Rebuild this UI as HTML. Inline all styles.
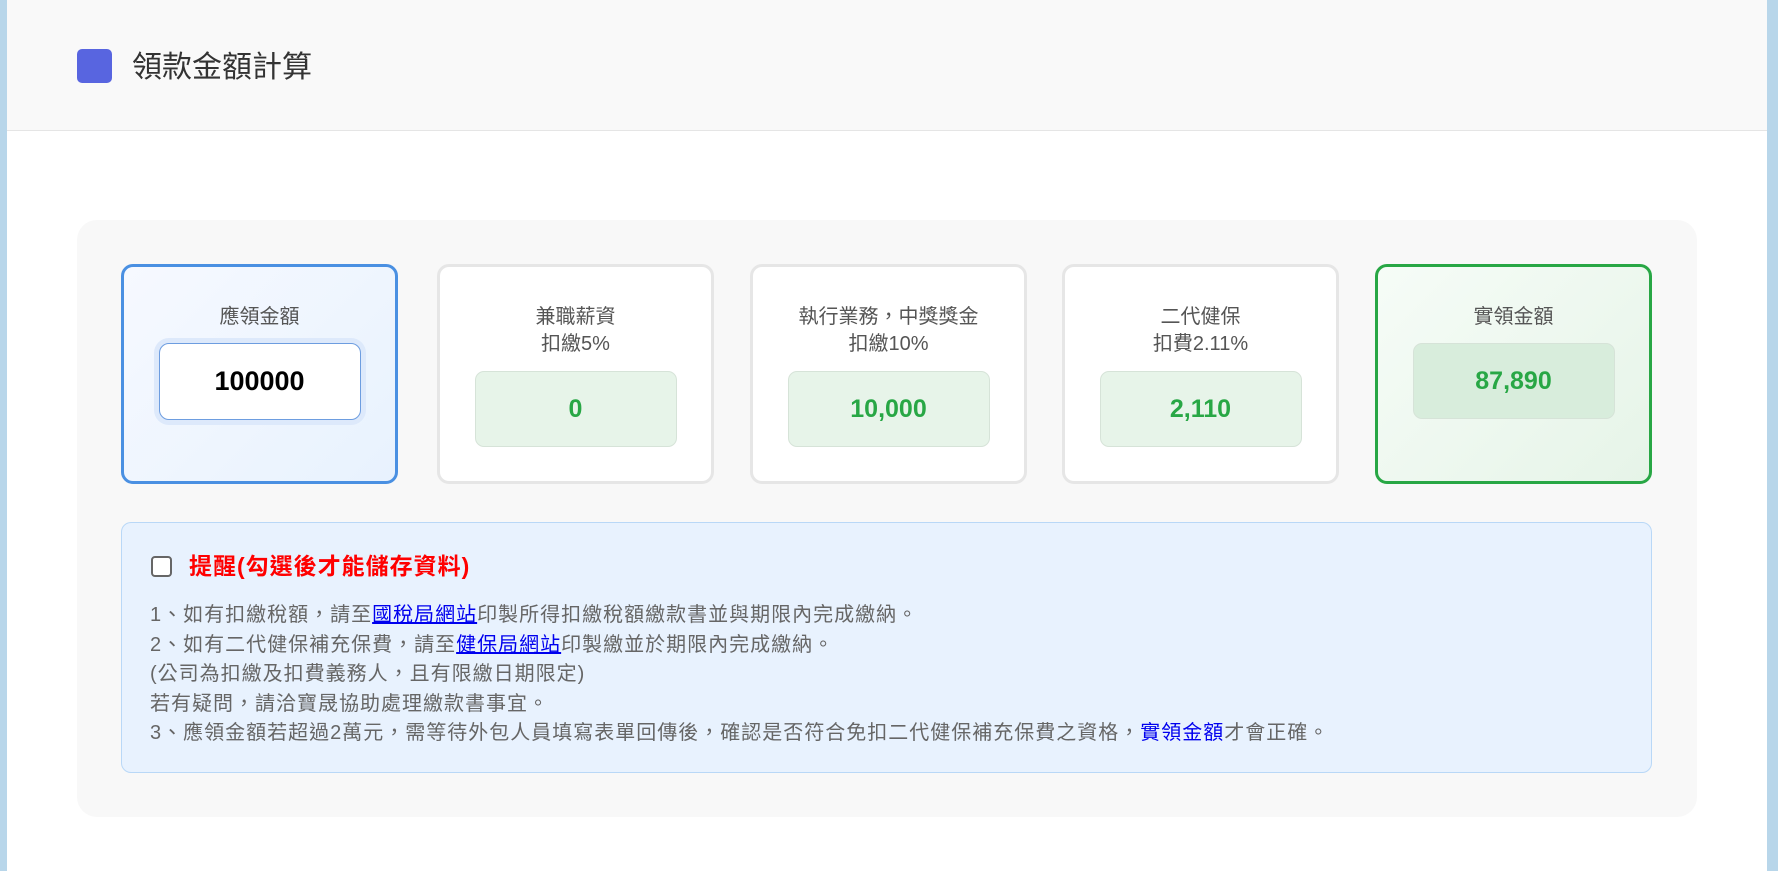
<!DOCTYPE html>
<html><head><meta charset="utf-8"><style>
*{box-sizing:border-box;margin:0;padding:0}
body{width:1778px;height:871px;overflow:hidden;background:#fff;font-family:"Liberation Sans","Noto Sans CJK TC",sans-serif;position:relative}
.lb{position:absolute;left:0;top:0;width:7px;height:871px;background:#b8d6ea}
.rb{position:absolute;left:1767px;top:0;width:11px;height:871px;background:#b8d6ea}
.hdr{position:absolute;left:7px;top:0;width:1760px;height:131px;background:#f9f9f9;border-bottom:1px solid #e5e5e5}
.ico{position:absolute;left:70px;top:49px;width:35px;height:34px;border-radius:5px;background:#5865e0}
.ttl{position:absolute;left:125px;top:48px;font-size:30px;line-height:40px;color:#333}
.panel{position:absolute;left:77px;top:220px;width:1620px;height:597px;background:#f8f8f8;border-radius:20px}
.card{position:absolute;top:264px;width:277px;height:220px;border:3px solid #e6e6e6;border-radius:12px;background:#fff;text-align:center;padding-top:37px}
.lab{font-size:20px;line-height:27px;color:#555}
.val{margin:13px auto 0;width:202px;height:76px;border:1px solid #d6e3d8;border-radius:9px;background:#e7f4e9;color:#28a745;font-weight:bold;font-size:25px;line-height:74px}
.c1{left:121px;border-color:#4a90e2;background:linear-gradient(135deg,#f6f9ff,#e8f2fe)}
.c5{left:1375px;border-color:#28a745;background:linear-gradient(135deg,#f6fcf7,#e6f4e8)}
.inp{margin:12px auto 0;width:202px;height:77px;border:1px solid #6d9de0;border-radius:10px;background:#fff;font-weight:bold;font-size:27px;line-height:75px;color:#000;box-shadow:0 0 0 5px #dde9fb}
.note{position:absolute;left:121px;top:522px;width:1531px;height:251px;background:#e8f2fe;border:1px solid #b9d8f7;border-radius:10px}
.cb{position:absolute;left:29px;top:33px;width:21px;height:21px;border:2px solid #666;border-radius:4px;background:#fff}
.nt{position:absolute;left:67px;top:27px;font-size:23px;line-height:32px;color:#f00;font-weight:bold;letter-spacing:1px}
.txt{position:absolute;left:28px;top:78px;font-size:20px;line-height:29.6px;color:#666;letter-spacing:1px;white-space:nowrap}
.txt a{color:#0000ee;text-decoration:underline}
.b{color:#0000ee}
</style></head><body>
<div class="lb"></div><div class="rb"></div>
<div class="hdr"><div class="ico"></div><div class="ttl">領款金額計算</div></div>
<div class="panel"></div>
<div class="card c1"><div class="lab">應領金額</div><div class="inp">100000</div></div>
<div class="card" style="left:437px"><div class="lab">兼職薪資<br>扣繳5%</div><div class="val">0</div></div>
<div class="card" style="left:750px"><div class="lab">執行業務，中獎獎金<br>扣繳10%</div><div class="val">10,000</div></div>
<div class="card" style="left:1062px"><div class="lab">二代健保<br>扣費2.11%</div><div class="val">2,110</div></div>
<div class="card c5"><div class="lab">實領金額</div><div class="val" style="margin-top:12px;background:#d8eddc">87,890</div></div>
<div class="note">
<div class="cb"></div><div class="nt">提醒(勾選後才能儲存資料)</div>
<div class="txt">1、如有扣繳稅額，請至<a>國稅局網站</a>印製所得扣繳稅額繳款書並與期限內完成繳納。<br>2、如有二代健保補充保費，請至<a>健保局網站</a>印製繳並於期限內完成繳納。<br>(公司為扣繳及扣費義務人，且有限繳日期限定)<br>若有疑問，請洽寶晟協助處理繳款書事宜。<br>3、應領金額若超過2萬元，需等待外包人員填寫表單回傳後，確認是否符合免扣二代健保補充保費之資格，<span class="b">實領金額</span>才會正確。</div>
</div>
</body></html>
